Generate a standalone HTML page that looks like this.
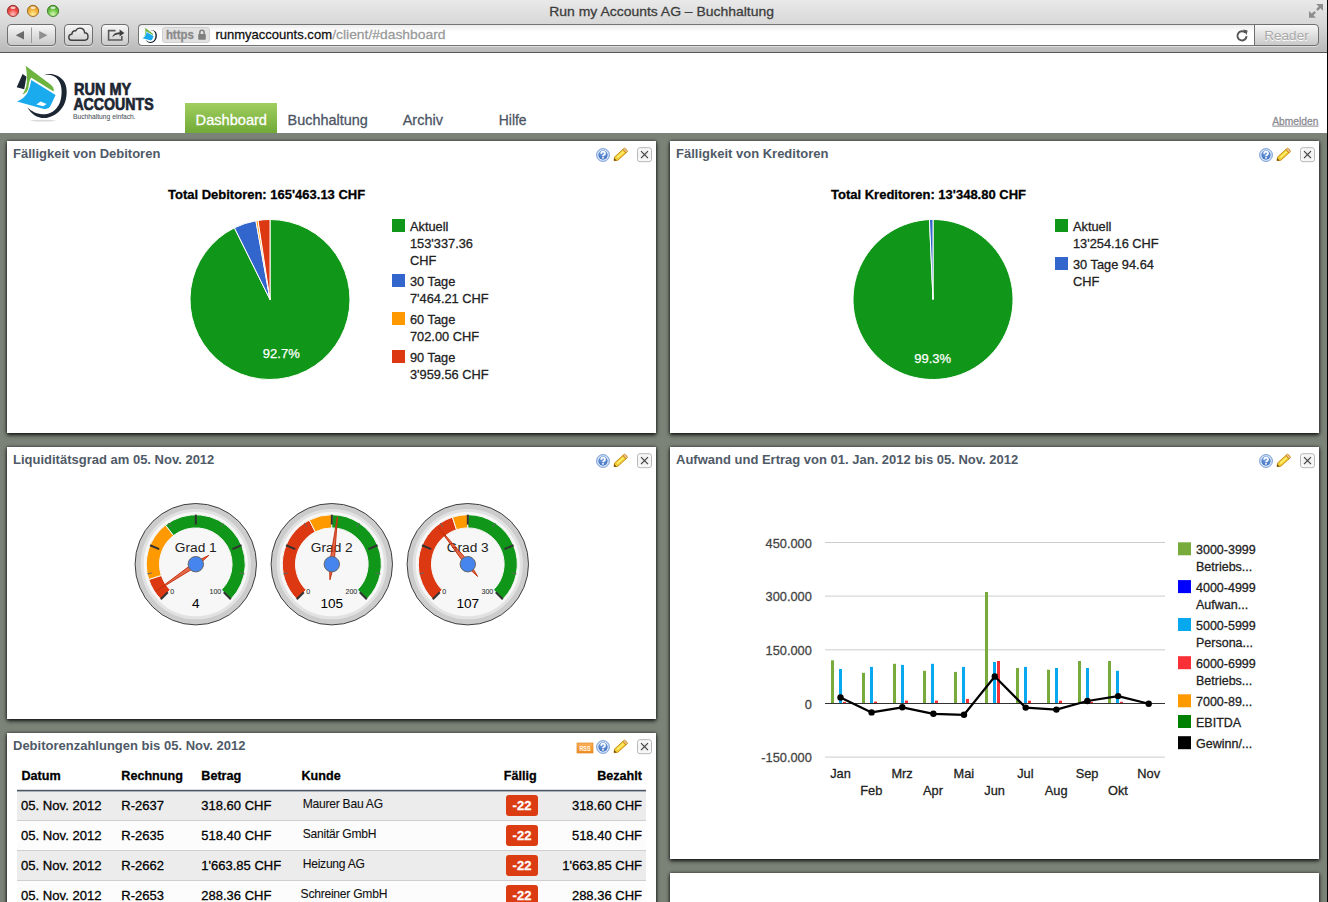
<!DOCTYPE html><html><head><meta charset="utf-8"><style>
*{box-sizing:border-box}
html,body{margin:0;padding:0}
body{width:1328px;height:902px;overflow:hidden;position:relative;background:#7b8378;font-family:"Liberation Sans",sans-serif;color:#222}
.abs{position:absolute}
#chrome{position:absolute;left:0;top:0;width:1328px;height:53px;background:linear-gradient(#e9e9e9,#d6d6d6 50%,#b9b9b9);border-bottom:1px solid #565656}
#title{position:absolute;left:0;width:1328px;top:3px;text-align:center;font-size:14px;color:#3e3e3e;letter-spacing:-0.1px}
.tl{position:absolute;top:5px;width:12px;height:12px;border-radius:50%;box-shadow:0 0 0 0.5px rgba(0,0,0,.35)}
.btn{position:absolute;top:24px;height:22px;border:1px solid #6f6f6f;border-radius:4px;background:linear-gradient(#f7f7f7,#c9c9c9);box-shadow:0 1px 0 rgba(255,255,255,.45)}
#addr{position:absolute;left:138px;top:24px;width:1117px;height:22px;border:1px solid #747474;box-shadow:0 1px 0 rgba(255,255,255,.45);border-right:none;border-radius:4px 0 0 4px;background:linear-gradient(#ececec,#fff 35%)}
#header{position:absolute;left:0;top:53px;width:1328px;height:80px;background:#fff}
.nav{position:absolute;top:103px;height:30px;font-size:14.5px;color:#4b5463;line-height:32px;white-space:nowrap}
.panel{position:absolute;background:#fff;box-shadow:0 2px 4px rgba(0,0,0,.8),0 0 3px rgba(0,0,0,.55)}
.ptitle{position:absolute;left:6px;top:5px;font-size:13px;font-weight:bold;color:#4f5a67;white-space:nowrap}
svg text{font-family:"Liberation Sans",sans-serif}
</style></head><body>

<div id="chrome">
  
  <div class="btn" style="left:7px;width:49px"></div>
  <div class="btn" style="left:64px;width:29px"></div>
  <div class="btn" style="left:101px;width:28px"></div>
  <div id="addr"></div>
  <div class="btn" style="left:1254px;width:65px;top:24px;height:22px;border-radius:0 4px 4px 0;font-size:13.5px;color:#a9a9a9;text-align:center;line-height:21px;text-shadow:0 1px 0 #fff">Reader</div>
  <div class="abs" style="left:162px;top:27px;width:48px;height:16px;border-radius:3px;background:#e2e2e2;border:1px solid #d0d0d0"></div>
  
  
</div>
<div id="header"></div>
<div class="abs" style="left:185px;top:103px;width:92px;height:30px;background:linear-gradient(#a0ce5f,#71aa36)"></div>



<div class="panel" style="left:7px;top:141px;width:649px;height:292px"><div class="ptitle">Fälligkeit von Debitoren</div></div>
<div class="panel" style="left:670px;top:141px;width:649px;height:292px"><div class="ptitle">Fälligkeit von Kreditoren</div></div>
<div class="panel" style="left:7px;top:447px;width:649px;height:272px"><div class="ptitle">Liquiditätsgrad am 05. Nov. 2012</div></div>
<div class="panel" style="left:670px;top:447px;width:649px;height:412px"><div class="ptitle">Aufwand und Ertrag von 01. Jan. 2012 bis 05. Nov. 2012</div></div>
<div class="panel" style="left:7px;top:733px;width:649px;height:200px"><div class="ptitle">Debitorenzahlungen bis 05. Nov. 2012</div></div>
<div class="panel" style="left:670px;top:873px;width:649px;height:100px"></div>

<svg class="abs" style="left:0;top:0" width="1328" height="902" viewBox="0 0 1328 902">
<defs><radialGradient id="hg" cx="50%" cy="30%" r="70%"><stop offset="0" stop-color="#7fa8e0"/><stop offset="1" stop-color="#3d6fc0"/></radialGradient><radialGradient id="cg" cx="50%" cy="50%" r="60%"><stop offset="0" stop-color="#e9e9e9"/><stop offset="1" stop-color="#fcfcfc"/></radialGradient><linearGradient id="rg" x1="0" y1="0" x2="0" y2="1"><stop offset="0" stop-color="#fbb15a"/><stop offset="1" stop-color="#f28a1e"/></linearGradient></defs>
<ellipse cx="43" cy="120.6" rx="13" ry="0.9" fill="#d8d8d8"/>
<path d="M43.9,75.3 C50,72.2 58.5,74.5 63.2,80.2 C67.6,85.6 67.4,95.5 65,102.3 C62.6,109.5 55.5,116.5 46.6,117.9 C38.7,119 31.2,114.5 27.3,107.2 C31.8,111.6 37.6,114.6 45.3,114.3 C53,113.8 58.6,107.8 60.5,100.6 C62.4,93.5 62.2,85.6 58.3,80 C54.8,75.1 48.8,74 43.9,75.3 Z" fill="#1c2632"/>
<path d="M25.6,65.7 L50.6,84.6 Q54.6,88 53.6,91.6 L31,77.6 Q28.6,82 28.3,88 Q27.6,92.6 22.3,94.6 Q26.3,89.5 26.8,82 Q27.2,72 25.6,65.7 Z" fill="#6cb33f"/>
<path d="M31.3,80 L55.6,94.9 L50.3,106.3 Q48.3,109.8 43.9,108.9 L17,101.6 Q24.6,98.4 27.6,92.6 Q30.2,87 31.3,80 Z" fill="#1aaaee"/>
<path d="M36.3,104.6 L40.6,101.6 L46.6,103.9 L43.3,106.2 Z" fill="#fff"/>
<path d="M22.6,74 L26.5,76.8 L24.2,89.3 L16.7,87.2 Z" fill="#1c2632"/>
<text x="74" y="94.9" font-size="16.3" font-weight="bold" fill="#1c2632" stroke="#1c2632" stroke-width="0.7" textLength="57.2" lengthAdjust="spacingAndGlyphs">RUN MY</text>
<text x="73.4" y="109.5" font-size="16.3" font-weight="bold" fill="#1c2632" stroke="#1c2632" stroke-width="0.7" textLength="80.3" lengthAdjust="spacingAndGlyphs">ACCOUNTS</text>
<text x="73" y="119" font-size="7.3" fill="#4d5560" textLength="62.7" lengthAdjust="spacingAndGlyphs" stroke="#4d5560" stroke-width="0.08">Buchhaltung einfach.</text>
<path d="M15.7,35.2 L24,31.1 L24,39.6 Z" fill="#6a6a6a"/>
<path d="M39.2,31.1 L39.2,39.6 L47.5,35.2 Z" fill="#8f8f8f"/>
<rect x="31" y="27.5" width="1" height="15.5" fill="#9a9a9a"/>
<path d="M71.5,40.2 Q68.8,40.2 68.8,37.3 Q68.8,34.4 71.8,34.3 Q72.3,30.6 75.6,30.8 Q77.2,27.9 80.6,28.2 Q84.4,28.6 84.6,32.8 Q88,33 88,36.6 Q88,40.2 84.8,40.2 Z" fill="none" stroke="#3f3f3f" stroke-width="1.4"/>
<path d="M115.5,30.6 L108.6,30.6 L108.6,40 L121.8,40 L121.8,36" fill="none" stroke="#5a5a5a" stroke-width="1.6"/>
<path d="M112.2,37.2 Q113.2,32.4 119.6,32.2 L119.6,29.6 L124.4,33 L119.6,36.6 L119.6,34.2 Q115,34.2 112.2,37.2 Z" fill="#3f3f3f"/>
<g transform="translate(142.2,27.6) scale(0.29)"><path d="M43.9,75.3 C50,72.2 58.5,74.5 63.2,80.2 C67.6,85.6 67.4,95.5 65,102.3 C62.6,109.5 55.5,116.5 46.6,117.9 C38.7,119 31.2,114.5 27.3,107.2 C31.8,111.6 37.6,114.6 45.3,114.3 C53,113.8 58.6,107.8 60.5,100.6 C62.4,93.5 62.2,85.6 58.3,80 C54.8,75.1 48.8,74 43.9,75.3 Z" fill="#1c2632" transform="translate(-16,-65)"/><path d="M25.6,65.7 L50.6,84.6 Q54.6,88 53.6,91.6 L31,77.6 Q28.6,82 28.3,88 Q27.6,92.6 22.3,94.6 Q26.3,89.5 26.8,82 Q27.2,72 25.6,65.7 Z" fill="#6cb33f" transform="translate(-16,-65)"/><path d="M31.3,80 L55.6,94.9 L50.3,106.3 Q48.3,109.8 43.9,108.9 L17,101.6 Q24.6,98.4 27.6,92.6 Q30.2,87 31.3,80 Z" fill="#1aaaee" transform="translate(-16,-65)"/></g>
<rect x="198.2" y="34" width="7.6" height="5.8" rx="0.8" fill="#7f7f7f"/>
<path d="M199.8,34.4 L199.8,32.4 Q199.8,30.2 202,30.2 Q204.2,30.2 204.2,32.4 L204.2,34.4" fill="none" stroke="#7f7f7f" stroke-width="1.5"/>
<path d="M1245.3,32.6 A4.6,4.6 0 1 0 1246.6,36.2" fill="none" stroke="#555" stroke-width="1.9"/>
<path d="M1243,29.6 L1247.6,30.4 L1246.6,35 Z" fill="#555"/>
<path d="M1316.2,4.1 L1323,4.1 L1323,10.8 Z M1309,10.9 L1309,17.7 L1315.9,17.7 Z" fill="#8c8c8c"/>
<path d="M1317.6,9.4 L1320.6,6.4 M1311.4,15.6 L1314.5,12.5" stroke="#8c8c8c" stroke-width="2.4" stroke-linecap="round"/>
<text x="195.6" y="125" font-size="14.7" fill="#fff" textLength="71.4" lengthAdjust="spacingAndGlyphs" stroke="#fff" stroke-width="0.28">Dashboard</text>
<text x="287.6" y="125" font-size="14.7" fill="#4b5463" textLength="80.2" lengthAdjust="spacingAndGlyphs" stroke="#4b5463" stroke-width="0.28">Buchhaltung</text>
<text x="402.7" y="125" font-size="14.7" fill="#4b5463" textLength="40.3" lengthAdjust="spacingAndGlyphs" stroke="#4b5463" stroke-width="0.28">Archiv</text>
<text x="498.8" y="125" font-size="14.7" fill="#4b5463" textLength="27.8" lengthAdjust="spacingAndGlyphs" stroke="#4b5463" stroke-width="0.28">Hilfe</text>
<text x="165.9" y="38.6" font-size="12" font-weight="bold" fill="#8a8a8a" textLength="27.9" lengthAdjust="spacingAndGlyphs" stroke="#8a8a8a" stroke-width="0.28">https</text>
<text x="1272.3" y="124.6" font-size="10.8" fill="#8a8a92" textLength="46.1" lengthAdjust="spacingAndGlyphs" stroke="#8a8a92" stroke-width="0.28">Abmelden</text>
<rect x="1272.3" y="125.6" width="46.2" height="1" fill="#8a8a92"/>
<text x="549.3" y="16" font-size="13.6" fill="#3c3c3c" textLength="224.7" lengthAdjust="spacingAndGlyphs" stroke="#3c3c3c" stroke-width="0.28">Run my Accounts AG – Buchhaltung</text>
<text x="215.4" y="38.6" font-size="13.2" fill="#111" textLength="116.6" lengthAdjust="spacingAndGlyphs" stroke="#111" stroke-width="0.28">runmyaccounts.com</text>
<text x="332.2" y="38.6" font-size="13.2" fill="#9a9a9a" textLength="113.4" lengthAdjust="spacingAndGlyphs" stroke="#9a9a9a" stroke-width="0.28">/client/#dashboard</text>
<defs><radialGradient id="tlr" cx="50%" cy="80%" r="75%"><stop offset="0" stop-color="#ffc4c4"/><stop offset="0.55" stop-color="#f2504a"/><stop offset="1" stop-color="#c8302c"/></radialGradient><radialGradient id="tly" cx="50%" cy="80%" r="75%"><stop offset="0" stop-color="#fff0a0"/><stop offset="0.55" stop-color="#f3b640"/><stop offset="1" stop-color="#d88a1c"/></radialGradient><radialGradient id="tlg" cx="50%" cy="80%" r="75%"><stop offset="0" stop-color="#d8f8b8"/><stop offset="0.55" stop-color="#74c84a"/><stop offset="1" stop-color="#3f9a2a"/></radialGradient></defs>
<circle cx="13" cy="10.9" r="5.6" fill="url(#tlr)" stroke="#8e2f2c" stroke-width="0.9"/>
<ellipse cx="13" cy="7.8" rx="2.6" ry="1.2" fill="#fff" fill-opacity="0.75"/>
<circle cx="33" cy="10.9" r="5.6" fill="url(#tly)" stroke="#94671c" stroke-width="0.9"/>
<ellipse cx="33" cy="7.8" rx="2.6" ry="1.2" fill="#fff" fill-opacity="0.75"/>
<circle cx="53" cy="10.9" r="5.6" fill="url(#tlg)" stroke="#3c7a26" stroke-width="0.9"/>
<ellipse cx="53" cy="7.8" rx="2.6" ry="1.2" fill="#fff" fill-opacity="0.75"/>
<circle cx="603" cy="155" r="6.5" fill="#a9c3ea" stroke="#7fa3da" stroke-width="0.9"/>
<circle cx="603" cy="155" r="5.5" fill="#eef4fc"/>
<circle cx="603" cy="155" r="4.7" fill="url(#hg)"/>
<path d="M601.1,153.7 Q601.1,151.6 603,151.6 Q605,151.6 605,153.4 Q605,154.5 603.9,155 Q603,155.4 603,156.3" fill="none" stroke="#fff" stroke-width="1.6"/>
<rect x="602.15" y="157.1" width="1.7" height="1.5" fill="#fff"/>
<g transform="translate(614,160.6) rotate(-42)"><path d="M0,0 L3,-2.3 L14.2,-2.3 L14.2,2.3 L3,2.3 Z" fill="#f0cf35" stroke="#c98a10" stroke-width="0.9"/><rect x="4.5" y="-0.9" width="8.5" height="1.5" fill="#fff27a"/><path d="M14.2,-2.3 L16,-2.3 Q17.4,0 16,2.3 L14.2,2.3 Z" fill="#f2c4a4" stroke="#c98a10" stroke-width="0.9"/><path d="M0,0 L2,-1.5 L2,1.5 Z" fill="#5a3a10"/></g>
<rect x="637.5" y="147.7" width="14" height="14" rx="2.5" fill="url(#cg)" stroke="#b8b8b8" stroke-width="1"/>
<path d="M641,151.2 L648,158.2 M648,151.2 L641,158.2" stroke="#3a3a3a" stroke-width="1.1"/>
<circle cx="1266" cy="155" r="6.5" fill="#a9c3ea" stroke="#7fa3da" stroke-width="0.9"/>
<circle cx="1266" cy="155" r="5.5" fill="#eef4fc"/>
<circle cx="1266" cy="155" r="4.7" fill="url(#hg)"/>
<path d="M1264.1,153.7 Q1264.1,151.6 1266,151.6 Q1268,151.6 1268,153.4 Q1268,154.5 1266.9,155 Q1266,155.4 1266,156.3" fill="none" stroke="#fff" stroke-width="1.6"/>
<rect x="1265.15" y="157.1" width="1.7" height="1.5" fill="#fff"/>
<g transform="translate(1277,160.6) rotate(-42)"><path d="M0,0 L3,-2.3 L14.2,-2.3 L14.2,2.3 L3,2.3 Z" fill="#f0cf35" stroke="#c98a10" stroke-width="0.9"/><rect x="4.5" y="-0.9" width="8.5" height="1.5" fill="#fff27a"/><path d="M14.2,-2.3 L16,-2.3 Q17.4,0 16,2.3 L14.2,2.3 Z" fill="#f2c4a4" stroke="#c98a10" stroke-width="0.9"/><path d="M0,0 L2,-1.5 L2,1.5 Z" fill="#5a3a10"/></g>
<rect x="1300.5" y="147.7" width="14" height="14" rx="2.5" fill="url(#cg)" stroke="#b8b8b8" stroke-width="1"/>
<path d="M1304,151.2 L1311,158.2 M1311,151.2 L1304,158.2" stroke="#3a3a3a" stroke-width="1.1"/>
<circle cx="603" cy="461" r="6.5" fill="#a9c3ea" stroke="#7fa3da" stroke-width="0.9"/>
<circle cx="603" cy="461" r="5.5" fill="#eef4fc"/>
<circle cx="603" cy="461" r="4.7" fill="url(#hg)"/>
<path d="M601.1,459.7 Q601.1,457.6 603,457.6 Q605,457.6 605,459.4 Q605,460.5 603.9,461 Q603,461.4 603,462.3" fill="none" stroke="#fff" stroke-width="1.6"/>
<rect x="602.15" y="463.1" width="1.7" height="1.5" fill="#fff"/>
<g transform="translate(614,466.6) rotate(-42)"><path d="M0,0 L3,-2.3 L14.2,-2.3 L14.2,2.3 L3,2.3 Z" fill="#f0cf35" stroke="#c98a10" stroke-width="0.9"/><rect x="4.5" y="-0.9" width="8.5" height="1.5" fill="#fff27a"/><path d="M14.2,-2.3 L16,-2.3 Q17.4,0 16,2.3 L14.2,2.3 Z" fill="#f2c4a4" stroke="#c98a10" stroke-width="0.9"/><path d="M0,0 L2,-1.5 L2,1.5 Z" fill="#5a3a10"/></g>
<rect x="637.5" y="453.7" width="14" height="14" rx="2.5" fill="url(#cg)" stroke="#b8b8b8" stroke-width="1"/>
<path d="M641,457.2 L648,464.2 M648,457.2 L641,464.2" stroke="#3a3a3a" stroke-width="1.1"/>
<circle cx="1266" cy="461" r="6.5" fill="#a9c3ea" stroke="#7fa3da" stroke-width="0.9"/>
<circle cx="1266" cy="461" r="5.5" fill="#eef4fc"/>
<circle cx="1266" cy="461" r="4.7" fill="url(#hg)"/>
<path d="M1264.1,459.7 Q1264.1,457.6 1266,457.6 Q1268,457.6 1268,459.4 Q1268,460.5 1266.9,461 Q1266,461.4 1266,462.3" fill="none" stroke="#fff" stroke-width="1.6"/>
<rect x="1265.15" y="463.1" width="1.7" height="1.5" fill="#fff"/>
<g transform="translate(1277,466.6) rotate(-42)"><path d="M0,0 L3,-2.3 L14.2,-2.3 L14.2,2.3 L3,2.3 Z" fill="#f0cf35" stroke="#c98a10" stroke-width="0.9"/><rect x="4.5" y="-0.9" width="8.5" height="1.5" fill="#fff27a"/><path d="M14.2,-2.3 L16,-2.3 Q17.4,0 16,2.3 L14.2,2.3 Z" fill="#f2c4a4" stroke="#c98a10" stroke-width="0.9"/><path d="M0,0 L2,-1.5 L2,1.5 Z" fill="#5a3a10"/></g>
<rect x="1300.5" y="453.7" width="14" height="14" rx="2.5" fill="url(#cg)" stroke="#b8b8b8" stroke-width="1"/>
<path d="M1304,457.2 L1311,464.2 M1311,457.2 L1304,464.2" stroke="#3a3a3a" stroke-width="1.1"/>
<circle cx="603" cy="747" r="6.5" fill="#a9c3ea" stroke="#7fa3da" stroke-width="0.9"/>
<circle cx="603" cy="747" r="5.5" fill="#eef4fc"/>
<circle cx="603" cy="747" r="4.7" fill="url(#hg)"/>
<path d="M601.1,745.7 Q601.1,743.6 603,743.6 Q605,743.6 605,745.4 Q605,746.5 603.9,747 Q603,747.4 603,748.3" fill="none" stroke="#fff" stroke-width="1.6"/>
<rect x="602.15" y="749.1" width="1.7" height="1.5" fill="#fff"/>
<g transform="translate(614,752.6) rotate(-42)"><path d="M0,0 L3,-2.3 L14.2,-2.3 L14.2,2.3 L3,2.3 Z" fill="#f0cf35" stroke="#c98a10" stroke-width="0.9"/><rect x="4.5" y="-0.9" width="8.5" height="1.5" fill="#fff27a"/><path d="M14.2,-2.3 L16,-2.3 Q17.4,0 16,2.3 L14.2,2.3 Z" fill="#f2c4a4" stroke="#c98a10" stroke-width="0.9"/><path d="M0,0 L2,-1.5 L2,1.5 Z" fill="#5a3a10"/></g>
<rect x="637.5" y="739.7" width="14" height="14" rx="2.5" fill="url(#cg)" stroke="#b8b8b8" stroke-width="1"/>
<path d="M641,743.2 L648,750.2 M648,743.2 L641,750.2" stroke="#3a3a3a" stroke-width="1.1"/>
<rect x="577" y="743" width="16" height="10" fill="url(#rg)" stroke="#e08a2a" stroke-width="0.7"/>
<text x="585" y="750.5" font-size="6.3" fill="#fff7ea" text-anchor="middle" font-weight="bold" textLength="11" lengthAdjust="spacingAndGlyphs" stroke="#fff7ea" stroke-width="0.08">RSS</text>
<text x="168" y="199" font-size="13" font-weight="bold" fill="#000" stroke="#000" stroke-width="0.28">Total Debitoren: 165'463.13 CHF</text>
<path d="M270,299.5 L270.00,219.50 A80,80 0 1 1 234.45,227.83 Z" fill="#109618" stroke="#fff" stroke-width="1"/>
<path d="M270,299.5 L234.45,227.83 A80,80 0 0 1 255.91,220.75 Z" fill="#3366cc" stroke="#fff" stroke-width="1"/>
<path d="M270,299.5 L255.91,220.75 A80,80 0 0 1 258.02,220.40 Z" fill="#ff9900" stroke="#fff" stroke-width="1"/>
<path d="M270,299.5 L258.02,220.40 A80,80 0 0 1 270.00,219.50 Z" fill="#dc3912" stroke="#fff" stroke-width="1"/>
<text x="281.3" y="357.7" font-size="13" fill="#fff" text-anchor="middle" stroke="#fff" stroke-width="0.25">92.7%</text>
<rect x="392" y="219" width="13" height="13" fill="#109618"/>
<text x="410" y="231" font-size="12.8" fill="#222" stroke="#222" stroke-width="0.28">Aktuell</text>
<text x="410" y="248" font-size="12.8" fill="#222" stroke="#222" stroke-width="0.28">153'337.36</text>
<text x="410" y="265" font-size="12.8" fill="#222" stroke="#222" stroke-width="0.28">CHF</text>
<rect x="392" y="274" width="13" height="13" fill="#3366cc"/>
<text x="410" y="286" font-size="12.8" fill="#222" stroke="#222" stroke-width="0.28">30 Tage</text>
<text x="410" y="303" font-size="12.8" fill="#222" stroke="#222" stroke-width="0.28">7'464.21 CHF</text>
<rect x="392" y="312" width="13" height="13" fill="#ff9900"/>
<text x="410" y="324" font-size="12.8" fill="#222" stroke="#222" stroke-width="0.28">60 Tage</text>
<text x="410" y="341" font-size="12.8" fill="#222" stroke="#222" stroke-width="0.28">702.00 CHF</text>
<rect x="392" y="350" width="13" height="13" fill="#dc3912"/>
<text x="410" y="362" font-size="12.8" fill="#222" stroke="#222" stroke-width="0.28">90 Tage</text>
<text x="410" y="379" font-size="12.8" fill="#222" stroke="#222" stroke-width="0.28">3'959.56 CHF</text>
<text x="831" y="199" font-size="13" font-weight="bold" fill="#000" stroke="#000" stroke-width="0.28">Total Kreditoren: 13'348.80 CHF</text>
<path d="M933,299.5 L933.00,219.50 A80,80 0 1 1 929.44,219.58 Z" fill="#109618" stroke="#fff" stroke-width="1"/>
<path d="M933,299.5 L929.44,219.58 A80,80 0 0 1 933.00,219.50 Z" fill="#3366cc" stroke="#fff" stroke-width="1"/>
<text x="932.7" y="362.5" font-size="13" fill="#fff" text-anchor="middle" stroke="#fff" stroke-width="0.25">99.3%</text>
<rect x="1055" y="219" width="13" height="13" fill="#109618"/>
<text x="1073" y="231" font-size="12.8" fill="#222" stroke="#222" stroke-width="0.28">Aktuell</text>
<text x="1073" y="248" font-size="12.8" fill="#222" stroke="#222" stroke-width="0.28">13'254.16 CHF</text>
<rect x="1055" y="257" width="13" height="13" fill="#3366cc"/>
<text x="1073" y="269" font-size="12.8" fill="#222" stroke="#222" stroke-width="0.28">30 Tage 94.64</text>
<text x="1073" y="286" font-size="12.8" fill="#222" stroke="#222" stroke-width="0.28">CHF</text>
<circle cx="195.8" cy="564.2" r="60.7" fill="#cccccc" stroke="#404040" stroke-width="1"/>
<circle cx="195.8" cy="564.2" r="53.6" fill="#f7f7f7" stroke="#e2e2e2" stroke-width="3"/>
<path d="M160.80,599.20 A49.5,49.5 0 0 1 148.72,579.50 L161.28,575.42 A36.3,36.3 0 0 0 170.13,589.87 Z" fill="#dc3912" stroke="#f7f7f7" stroke-width="1"/>
<path d="M148.72,579.50 A49.5,49.5 0 0 1 165.46,525.09 L173.55,535.52 A36.3,36.3 0 0 0 161.28,575.42 Z" fill="#ff9900" stroke="#f7f7f7" stroke-width="1"/>
<path d="M165.46,525.09 A49.5,49.5 0 0 1 230.80,599.20 L221.47,589.87 A36.3,36.3 0 0 0 173.55,535.52 Z" fill="#109618" stroke="#f7f7f7" stroke-width="1"/>
<line x1="160.80" y1="599.20" x2="167.80" y2="592.20" stroke="#333" stroke-width="2"/>
<line x1="150.07" y1="545.26" x2="159.21" y2="549.05" stroke="#333" stroke-width="2"/>
<line x1="195.80" y1="514.70" x2="195.80" y2="524.60" stroke="#333" stroke-width="2"/>
<line x1="241.53" y1="545.26" x2="232.39" y2="549.05" stroke="#333" stroke-width="2"/>
<line x1="230.80" y1="599.20" x2="223.80" y2="592.20" stroke="#333" stroke-width="2"/>
<line x1="147.25" y1="573.86" x2="151.86" y2="572.94" stroke="#666" stroke-width="1"/>
<line x1="168.30" y1="523.04" x2="170.91" y2="526.95" stroke="#666" stroke-width="1"/>
<line x1="223.30" y1="523.04" x2="220.69" y2="526.95" stroke="#666" stroke-width="1"/>
<line x1="244.35" y1="573.86" x2="239.74" y2="572.94" stroke="#666" stroke-width="1"/>
<text class="ns" x="195.8" y="551.6" font-size="13.7" fill="#222" text-anchor="middle">Grad 1</text>
<text x="170.20000000000002" y="593.8" font-size="7" fill="#333" stroke="#333" stroke-width="0.08">0</text>
<text x="221.20000000000002" y="593.8" font-size="7" fill="#333" text-anchor="end" stroke="#333" stroke-width="0.08">100</text>
<text class="ns" x="195.8" y="607.7" font-size="13.6" fill="#000" text-anchor="middle">4</text>
<path d="M156.27,591.07 L194.51,562.30 L208.79,555.38 L197.09,566.10 Z" fill="#dc3912" fill-opacity="0.75" stroke="#c63310" stroke-width="1"/>
<circle cx="195.8" cy="564.2" r="7.7" fill="#4684ee" stroke="#666" stroke-width="1"/>
<circle cx="331.8" cy="564.2" r="60.7" fill="#cccccc" stroke="#404040" stroke-width="1"/>
<circle cx="331.8" cy="564.2" r="53.6" fill="#f7f7f7" stroke="#e2e2e2" stroke-width="3"/>
<path d="M296.80,599.20 A49.5,49.5 0 0 1 309.33,520.10 L315.32,531.86 A36.3,36.3 0 0 0 306.13,589.87 Z" fill="#dc3912" stroke="#f7f7f7" stroke-width="1"/>
<path d="M309.33,520.10 A49.5,49.5 0 0 1 331.80,514.70 L331.80,527.90 A36.3,36.3 0 0 0 315.32,531.86 Z" fill="#ff9900" stroke="#f7f7f7" stroke-width="1"/>
<path d="M331.80,514.70 A49.5,49.5 0 0 1 366.80,599.20 L357.47,589.87 A36.3,36.3 0 0 0 331.80,527.90 Z" fill="#109618" stroke="#f7f7f7" stroke-width="1"/>
<line x1="296.80" y1="599.20" x2="303.80" y2="592.20" stroke="#333" stroke-width="2"/>
<line x1="286.07" y1="545.26" x2="295.21" y2="549.05" stroke="#333" stroke-width="2"/>
<line x1="331.80" y1="514.70" x2="331.80" y2="524.60" stroke="#333" stroke-width="2"/>
<line x1="377.53" y1="545.26" x2="368.39" y2="549.05" stroke="#333" stroke-width="2"/>
<line x1="366.80" y1="599.20" x2="359.80" y2="592.20" stroke="#333" stroke-width="2"/>
<line x1="283.25" y1="573.86" x2="287.86" y2="572.94" stroke="#666" stroke-width="1"/>
<line x1="304.30" y1="523.04" x2="306.91" y2="526.95" stroke="#666" stroke-width="1"/>
<line x1="359.30" y1="523.04" x2="356.69" y2="526.95" stroke="#666" stroke-width="1"/>
<line x1="380.35" y1="573.86" x2="375.74" y2="572.94" stroke="#666" stroke-width="1"/>
<text class="ns" x="331.8" y="551.6" font-size="13.7" fill="#222" text-anchor="middle">Grad 2</text>
<text x="306.2" y="593.8" font-size="7" fill="#333" stroke="#333" stroke-width="0.08">0</text>
<text x="357.2" y="593.8" font-size="7" fill="#333" text-anchor="end" stroke="#333" stroke-width="0.08">200</text>
<text class="ns" x="331.8" y="607.7" font-size="13.6" fill="#000" text-anchor="middle">105</text>
<path d="M337.42,516.73 L334.08,564.47 L329.95,579.79 L329.52,563.93 Z" fill="#dc3912" fill-opacity="0.75" stroke="#c63310" stroke-width="1"/>
<circle cx="331.8" cy="564.2" r="7.7" fill="#4684ee" stroke="#666" stroke-width="1"/>
<circle cx="467.8" cy="564.2" r="60.7" fill="#cccccc" stroke="#404040" stroke-width="1"/>
<circle cx="467.8" cy="564.2" r="53.6" fill="#f7f7f7" stroke="#e2e2e2" stroke-width="3"/>
<path d="M432.80,599.20 A49.5,49.5 0 0 1 452.43,517.15 L456.53,529.69 A36.3,36.3 0 0 0 442.13,589.87 Z" fill="#dc3912" stroke="#f7f7f7" stroke-width="1"/>
<path d="M452.43,517.15 A49.5,49.5 0 0 1 467.80,514.70 L467.80,527.90 A36.3,36.3 0 0 0 456.53,529.69 Z" fill="#ff9900" stroke="#f7f7f7" stroke-width="1"/>
<path d="M467.80,514.70 A49.5,49.5 0 0 1 502.80,599.20 L493.47,589.87 A36.3,36.3 0 0 0 467.80,527.90 Z" fill="#109618" stroke="#f7f7f7" stroke-width="1"/>
<line x1="432.80" y1="599.20" x2="439.80" y2="592.20" stroke="#333" stroke-width="2"/>
<line x1="422.07" y1="545.26" x2="431.21" y2="549.05" stroke="#333" stroke-width="2"/>
<line x1="467.80" y1="514.70" x2="467.80" y2="524.60" stroke="#333" stroke-width="2"/>
<line x1="513.53" y1="545.26" x2="504.39" y2="549.05" stroke="#333" stroke-width="2"/>
<line x1="502.80" y1="599.20" x2="495.80" y2="592.20" stroke="#333" stroke-width="2"/>
<line x1="419.25" y1="573.86" x2="423.86" y2="572.94" stroke="#666" stroke-width="1"/>
<line x1="440.30" y1="523.04" x2="442.91" y2="526.95" stroke="#666" stroke-width="1"/>
<line x1="495.30" y1="523.04" x2="492.69" y2="526.95" stroke="#666" stroke-width="1"/>
<line x1="516.35" y1="573.86" x2="511.74" y2="572.94" stroke="#666" stroke-width="1"/>
<text class="ns" x="467.8" y="551.6" font-size="13.7" fill="#222" text-anchor="middle">Grad 3</text>
<text x="442.2" y="593.8" font-size="7" fill="#333" stroke="#333" stroke-width="0.08">0</text>
<text x="493.2" y="593.8" font-size="7" fill="#333" text-anchor="end" stroke="#333" stroke-width="0.08">300</text>
<text class="ns" x="467.8" y="607.7" font-size="13.6" fill="#000" text-anchor="middle">107</text>
<path d="M437.91,526.90 L469.59,562.76 L477.62,576.45 L466.01,565.64 Z" fill="#dc3912" fill-opacity="0.75" stroke="#c63310" stroke-width="1"/>
<circle cx="467.8" cy="564.2" r="7.7" fill="#4684ee" stroke="#666" stroke-width="1"/>
<rect x="825" y="542.0" width="340" height="1" fill="#cccccc"/>
<text x="811.8" y="547.8" font-size="12.8" fill="#444" text-anchor="end" stroke="#444" stroke-width="0.28">450.000</text>
<rect x="825" y="595.6" width="340" height="1" fill="#cccccc"/>
<text x="811.8" y="601.4" font-size="12.8" fill="#444" text-anchor="end" stroke="#444" stroke-width="0.28">300.000</text>
<rect x="825" y="649.3" width="340" height="1" fill="#cccccc"/>
<text x="811.8" y="655.1" font-size="12.8" fill="#444" text-anchor="end" stroke="#444" stroke-width="0.28">150.000</text>
<rect x="825" y="703.0" width="340" height="1" fill="#333"/>
<text x="811.8" y="708.8" font-size="12.8" fill="#444" text-anchor="end" stroke="#444" stroke-width="0.28">0</text>
<rect x="825" y="756.6" width="340" height="1" fill="#cccccc"/>
<text x="811.8" y="762.4" font-size="12.8" fill="#444" text-anchor="end" stroke="#444" stroke-width="0.28">-150.000</text>
<rect x="831" y="660.3" width="3" height="43.2" fill="#77ac3c"/>
<rect x="839" y="669" width="3" height="34.5" fill="#08a8ef"/>
<rect x="843" y="701.9" width="3" height="1.6" fill="#f93035"/>
<rect x="862" y="672.8" width="3" height="30.7" fill="#77ac3c"/>
<rect x="870" y="666.9" width="3" height="36.6" fill="#08a8ef"/>
<rect x="874" y="701.6" width="3" height="1.9" fill="#f93035"/>
<rect x="893" y="663.8" width="3" height="39.7" fill="#77ac3c"/>
<rect x="901" y="664.9" width="3" height="38.6" fill="#08a8ef"/>
<rect x="905" y="700.6" width="3" height="2.9" fill="#f93035"/>
<rect x="923" y="670.8" width="3" height="32.7" fill="#77ac3c"/>
<rect x="931" y="663.8" width="3" height="39.7" fill="#08a8ef"/>
<rect x="935" y="700.6" width="3" height="2.9" fill="#f93035"/>
<rect x="954" y="671.9" width="3" height="31.6" fill="#77ac3c"/>
<rect x="962" y="666.9" width="3" height="36.6" fill="#08a8ef"/>
<rect x="966" y="698.9" width="3" height="4.6" fill="#f93035"/>
<rect x="985" y="592" width="3" height="111.5" fill="#77ac3c"/>
<rect x="993" y="662" width="3" height="41.5" fill="#08a8ef"/>
<rect x="997" y="661" width="3" height="42.5" fill="#f93035"/>
<rect x="1016" y="668" width="3" height="35.5" fill="#77ac3c"/>
<rect x="1024" y="666.9" width="3" height="36.6" fill="#08a8ef"/>
<rect x="1028" y="700.7" width="3" height="2.8" fill="#f93035"/>
<rect x="1047" y="669.7" width="3" height="33.8" fill="#77ac3c"/>
<rect x="1055" y="668" width="3" height="35.5" fill="#08a8ef"/>
<rect x="1059" y="700.7" width="3" height="2.8" fill="#f93035"/>
<rect x="1078" y="661" width="3" height="42.5" fill="#77ac3c"/>
<rect x="1086" y="668" width="3" height="35.5" fill="#08a8ef"/>
<rect x="1090" y="701.8" width="3" height="1.7" fill="#f93035"/>
<rect x="1108" y="661" width="3" height="42.5" fill="#77ac3c"/>
<rect x="1116" y="670.8" width="3" height="32.7" fill="#08a8ef"/>
<rect x="1120" y="701.8" width="3" height="1.7" fill="#f93035"/>
<rect x="825" y="703.0" width="340" height="1" fill="#333"/>
<polyline points="840.5,697.5 871.6,712.4 902.3,707.3 933.4,713.8 964,714.8 994.8,676.5 1025.7,707.6 1056.4,709.6 1087.4,701 1118.1,696.1 1148.7,703.8" fill="none" stroke="#000" stroke-width="2.2" stroke-linejoin="round"/>
<circle cx="840.5" cy="697.5" r="3.2" fill="#000"/>
<circle cx="871.6" cy="712.4" r="3.2" fill="#000"/>
<circle cx="902.3" cy="707.3" r="3.2" fill="#000"/>
<circle cx="933.4" cy="713.8" r="3.2" fill="#000"/>
<circle cx="964" cy="714.8" r="3.2" fill="#000"/>
<circle cx="994.8" cy="676.5" r="3.2" fill="#000"/>
<circle cx="1025.7" cy="707.6" r="3.2" fill="#000"/>
<circle cx="1056.4" cy="709.6" r="3.2" fill="#000"/>
<circle cx="1087.4" cy="701" r="3.2" fill="#000"/>
<circle cx="1118.1" cy="696.1" r="3.2" fill="#000"/>
<circle cx="1148.7" cy="703.8" r="3.2" fill="#000"/>
<text x="840.5" y="778.4" font-size="12.8" fill="#222" text-anchor="middle" stroke="#222" stroke-width="0.28">Jan</text>
<text x="871.3" y="795.0" font-size="12.8" fill="#222" text-anchor="middle" stroke="#222" stroke-width="0.28">Feb</text>
<text x="902.1" y="778.4" font-size="12.8" fill="#222" text-anchor="middle" stroke="#222" stroke-width="0.28">Mrz</text>
<text x="933.0" y="795.0" font-size="12.8" fill="#222" text-anchor="middle" stroke="#222" stroke-width="0.28">Apr</text>
<text x="963.8" y="778.4" font-size="12.8" fill="#222" text-anchor="middle" stroke="#222" stroke-width="0.28">Mai</text>
<text x="994.6" y="795.0" font-size="12.8" fill="#222" text-anchor="middle" stroke="#222" stroke-width="0.28">Jun</text>
<text x="1025.4" y="778.4" font-size="12.8" fill="#222" text-anchor="middle" stroke="#222" stroke-width="0.28">Jul</text>
<text x="1056.2" y="795.0" font-size="12.8" fill="#222" text-anchor="middle" stroke="#222" stroke-width="0.28">Aug</text>
<text x="1087.1" y="778.4" font-size="12.8" fill="#222" text-anchor="middle" stroke="#222" stroke-width="0.28">Sep</text>
<text x="1117.9" y="795.0" font-size="12.8" fill="#222" text-anchor="middle" stroke="#222" stroke-width="0.28">Okt</text>
<text x="1148.7" y="778.4" font-size="12.8" fill="#222" text-anchor="middle" stroke="#222" stroke-width="0.28">Nov</text>
<rect x="1178" y="542.3" width="13" height="13" fill="#77ac3c"/>
<text x="1196" y="554.3" font-size="12.5" fill="#222" stroke="#222" stroke-width="0.28">3000-3999</text>
<text x="1196" y="571.3" font-size="12.5" fill="#222" stroke="#222" stroke-width="0.28">Betriebs...</text>
<rect x="1178" y="580.1" width="13" height="13" fill="#0000ff"/>
<text x="1196" y="592.1" font-size="12.5" fill="#222" stroke="#222" stroke-width="0.28">4000-4999</text>
<text x="1196" y="609.1" font-size="12.5" fill="#222" stroke="#222" stroke-width="0.28">Aufwan...</text>
<rect x="1178" y="618" width="13" height="13" fill="#08a8ef"/>
<text x="1196" y="630" font-size="12.5" fill="#222" stroke="#222" stroke-width="0.28">5000-5999</text>
<text x="1196" y="647" font-size="12.5" fill="#222" stroke="#222" stroke-width="0.28">Persona...</text>
<rect x="1178" y="656.2" width="13" height="13" fill="#f93035"/>
<text x="1196" y="668.2" font-size="12.5" fill="#222" stroke="#222" stroke-width="0.28">6000-6999</text>
<text x="1196" y="685.2" font-size="12.5" fill="#222" stroke="#222" stroke-width="0.28">Betriebs...</text>
<rect x="1178" y="694.3" width="13" height="13" fill="#ff9900"/>
<text x="1196" y="706.3" font-size="12.5" fill="#222" stroke="#222" stroke-width="0.28">7000-89...</text>
<rect x="1178" y="715" width="13" height="13" fill="#008000"/>
<text x="1196" y="727" font-size="12.5" fill="#222" stroke="#222" stroke-width="0.28">EBITDA</text>
<rect x="1178" y="736.2" width="13" height="13" fill="#000"/>
<text x="1196" y="748.2" font-size="12.5" fill="#222" stroke="#222" stroke-width="0.28">Gewinn/...</text>
<text x="21.5" y="780" font-size="12.6" font-weight="bold" fill="#000" stroke="#000" stroke-width="0.28">Datum</text>
<text x="121.3" y="780" font-size="12.6" font-weight="bold" fill="#000" stroke="#000" stroke-width="0.28">Rechnung</text>
<text x="201.3" y="780" font-size="12.6" font-weight="bold" fill="#000" stroke="#000" stroke-width="0.28">Betrag</text>
<text x="301.5" y="780" font-size="12.6" font-weight="bold" fill="#000" stroke="#000" stroke-width="0.28">Kunde</text>
<text x="536.7" y="780" font-size="12.6" font-weight="bold" fill="#000" text-anchor="end" stroke="#000" stroke-width="0.28">Fällig</text>
<text x="642" y="780" font-size="12.6" font-weight="bold" fill="#000" text-anchor="end" stroke="#000" stroke-width="0.28">Bezahlt</text>
<rect x="17" y="791" width="629" height="29" fill="#ececec"/>
<rect x="17" y="820" width="629" height="1" fill="#cfcfcf"/>
<text x="21" y="809.8" font-size="13.1" fill="#000" stroke="#000" stroke-width="0.28">05. Nov. 2012</text>
<text x="121.3" y="809.8" font-size="13" fill="#000" stroke="#000" stroke-width="0.28">R-2637</text>
<text x="201.3" y="809.8" font-size="13" fill="#000" stroke="#000" stroke-width="0.28">318.60 CHF</text>
<text x="302.7" y="808.2" font-size="12.1" fill="#111" letter-spacing="-0.25" stroke="#111" stroke-width="0.1">Maurer Bau AG</text>
<rect x="506" y="795" width="32" height="21" rx="3" fill="#dc3c12"/>
<text x="522" y="809.8" font-size="13" font-weight="bold" fill="#fff" text-anchor="middle" stroke="#fff" stroke-width="0.28">-22</text>
<text x="642" y="809.8" font-size="13" fill="#000" text-anchor="end" stroke="#000" stroke-width="0.28">318.60 CHF</text>
<rect x="17" y="821" width="629" height="29" fill="#fcfcfc"/>
<rect x="17" y="850" width="629" height="1" fill="#cfcfcf"/>
<text x="21" y="839.8" font-size="13.1" fill="#000" stroke="#000" stroke-width="0.28">05. Nov. 2012</text>
<text x="121.3" y="839.8" font-size="13" fill="#000" stroke="#000" stroke-width="0.28">R-2635</text>
<text x="201.3" y="839.8" font-size="13" fill="#000" stroke="#000" stroke-width="0.28">518.40 CHF</text>
<text x="302.7" y="838.2" font-size="12.1" fill="#111" letter-spacing="-0.25" stroke="#111" stroke-width="0.1">Sanitär GmbH</text>
<rect x="506" y="825" width="32" height="21" rx="3" fill="#dc3c12"/>
<text x="522" y="839.8" font-size="13" font-weight="bold" fill="#fff" text-anchor="middle" stroke="#fff" stroke-width="0.28">-22</text>
<text x="642" y="839.8" font-size="13" fill="#000" text-anchor="end" stroke="#000" stroke-width="0.28">518.40 CHF</text>
<rect x="17" y="851" width="629" height="29" fill="#ececec"/>
<rect x="17" y="880" width="629" height="1" fill="#cfcfcf"/>
<text x="21" y="869.8" font-size="13.1" fill="#000" stroke="#000" stroke-width="0.28">05. Nov. 2012</text>
<text x="121.3" y="869.8" font-size="13" fill="#000" stroke="#000" stroke-width="0.28">R-2662</text>
<text x="201.3" y="869.8" font-size="13" fill="#000" stroke="#000" stroke-width="0.28">1'663.85 CHF</text>
<text x="302.7" y="868.2" font-size="12.1" fill="#111" letter-spacing="-0.25" stroke="#111" stroke-width="0.1">Heizung AG</text>
<rect x="506" y="855" width="32" height="21" rx="3" fill="#dc3c12"/>
<text x="522" y="869.8" font-size="13" font-weight="bold" fill="#fff" text-anchor="middle" stroke="#fff" stroke-width="0.28">-22</text>
<text x="642" y="869.8" font-size="13" fill="#000" text-anchor="end" stroke="#000" stroke-width="0.28">1'663.85 CHF</text>
<rect x="17" y="881" width="629" height="29" fill="#fcfcfc"/>
<rect x="17" y="910" width="629" height="1" fill="#cfcfcf"/>
<text x="21" y="899.8" font-size="13.1" fill="#000" stroke="#000" stroke-width="0.28">05. Nov. 2012</text>
<text x="121.3" y="899.8" font-size="13" fill="#000" stroke="#000" stroke-width="0.28">R-2653</text>
<text x="201.3" y="899.8" font-size="13" fill="#000" stroke="#000" stroke-width="0.28">288.36 CHF</text>
<text x="300.6" y="897.8000000000001" font-size="12.1" fill="#111" letter-spacing="-0.25" stroke="#111" stroke-width="0.1">Schreiner GmbH</text>
<rect x="506" y="885" width="32" height="21" rx="3" fill="#dc3c12"/>
<text x="522" y="899.8" font-size="13" font-weight="bold" fill="#fff" text-anchor="middle" stroke="#fff" stroke-width="0.28">-22</text>
<text x="642" y="899.8" font-size="13" fill="#000" text-anchor="end" stroke="#000" stroke-width="0.28">288.36 CHF</text>
<rect x="17" y="789.8" width="629" height="1.6" fill="#4a5664"/>
</svg>
<div class="abs" style="left:1327px;top:0;width:1px;height:902px;background:#000"></div>
</body></html>
